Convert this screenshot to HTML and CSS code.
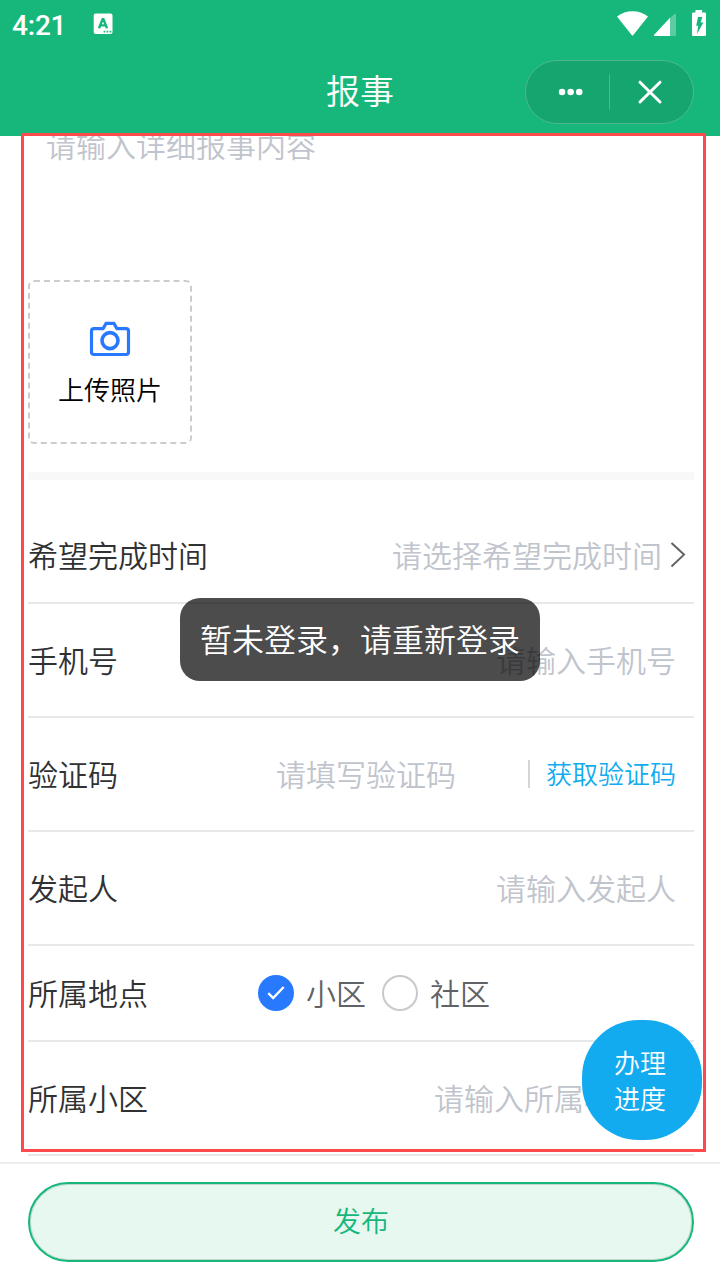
FILE: index.html
```
<!DOCTYPE html>
<html lang="zh-CN">
<head>
<meta charset="utf-8">
<title>报事</title>
<link rel="stylesheet" href="styles.css">
</head>
<body>
<div class="app">
  <header class="header">
    <div class="status">
      <span class="clock">4:21</span>
      <svg class="input-icon" width="20" height="22" viewBox="0 0 20 22">
        <rect x="0.7" y="0.5" width="18.8" height="20.5" rx="2" fill="#fff"/>
        <path d="M6 15.200L9.600 6.300h.8l3.600 8.900M7.200 12.400h5.600" fill="none" stroke="#17b77c" stroke-width="2.400"/>
        <path d="M10.600 18.700h1.700M13.600 18.700h1.700M16.600 18.700h1.700" stroke="#17b77c" stroke-width="1.700"/>
      </svg>
      <svg class="system-icons" width="92" height="28" viewBox="616 9 92 28">
        <path d="M617 16.500Q624 11.300 632.500 11.300T648 16.500L633.300 35q-.8 1-1.600 0z" fill="#fff"/>
        <path d="M670 18l4.600-4.100q1.400-.6 1.400.8V34.700q0 1.300-1.300 1.300H670z" fill="#fff" fill-opacity=".3"/>
        <path d="M670 17.800V36h-15.600q-1-.5 0-1.600z" fill="#fff"/>
        <path d="M695.500 10h6.600v2.500h2.600q1.300 0 1.300 1.300v21q0 1.200-1.300 1.200h-11.400q-1.300 0-1.300-1.200v-21q0-1.300 1.300-1.300h2.200z" fill="#fff"/>
        <path d="M698 17h4.300l-1.600 5.600h2.700L697 34l1.200-8.300h-2z" fill="#17b77c"/>
      </svg>
    </div>
    <div class="navbar">
      <h1 class="title">报事</h1>
      <div class="capsule">
        <svg class="capsule-half" width="84" height="62" viewBox="526 61 84 62">
          <g fill="#fff"><circle cx="562.500" cy="92" r="3.300"/><circle cx="571.200" cy="92" r="3.300"/><circle cx="579.900" cy="92" r="3.300"/></g>
        </svg>
        <span class="capsule-line"></span>
        <svg class="capsule-half" width="83" height="62" viewBox="610 61 83 62">
          <path d="M640 82.200L660 102M660 82.200L640 102" stroke="#fff" stroke-width="3" stroke-linecap="round"/>
        </svg>
      </div>
    </div>
  </header>

  <main class="content">
    <div class="detail">请输入详细报事内容</div>
    <div class="upload">
      <svg width="42" height="36" viewBox="89 321 42 36" fill="none" stroke="#2979ff" stroke-width="3.200" stroke-linejoin="round">
        <path d="M94 328.600h9.200l2.800-5.200h8l2.800 5.200h9.200q2.500 0 2.500 2.500V352q0 2.500-2.500 2.500H94q-2.500 0-2.500-2.500v-20.900q0-2.500 2.500-2.500z"/>
        <circle cx="110" cy="340.600" r="8" stroke-width="3.600"/>
      </svg>
      <span class="upload-text">上传照片</span>
    </div>
    <div class="band"></div>
    <div class="row row-short row-time">
      <span class="label">希望完成时间</span>
      <span class="hint">请选择希望完成时间</span>
      <svg class="chevron" width="18" height="28" viewBox="670 541 18 28"><path d="M671.500 543L684 554.600L671.500 566.500" fill="none" stroke="#606266" stroke-width="2"/></svg>
    </div>
    <div class="row"><span class="label">手机号</span><span class="hint">请输入手机号</span></div>
    <div class="row">
      <span class="label">验证码</span><span class="hint">请填写验证码</span>
      <span class="code-button"><span class="code-text">获取验证码</span></span>
    </div>
    <div class="row"><span class="label">发起人</span><span class="hint">请输入发起人</span></div>
    <div class="row row-short">
      <span class="label label-place">所属地点</span>
      <span class="radio radio-on"><svg width="36" height="36" viewBox="0 0 36 36"><path d="M10.300 18.200l4.900 4.900L25.700 12" fill="none" stroke="#fff" stroke-width="2.400"/></svg></span>
      <span class="choice">小区</span>
      <span class="radio"></span>
      <span class="choice">社区</span>
    </div>
    <div class="row row-estate"><span class="label">所属小区</span><span class="hint">请输入所属小区</span></div>
  </main>

  <footer class="footer"><div class="submit">发布</div></footer>

  <div class="outline"></div>
  <div class="progress"><span>办理</span><span>进度</span></div>
  <div class="toast">暂未登录，请重新登录</div>
</div>
</body>
</html>
```
FILE: styles.css
```
* { box-sizing: border-box; }
body {
  margin: 0;
  background: #fff;
  font-family: "Noto Sans CJK SC DemiLight", "Noto Sans CJK SC", sans-serif;
  font-weight: 350;
}
.app {
  position: relative;
  width: 720px;
  height: 1280px;
  overflow: hidden;
  display: flex;
  flex-direction: column;
}
svg { display: block; flex: none; }

.header { height: 136px; flex: none; background: #17b77c; color: #fff; }
.status { height: 48px; display: flex; align-items: flex-start; padding: 9px 12px 0; }
.clock {
  width: 81px;
  font: 500 28px/33px Roboto, sans-serif;
  letter-spacing: -0.2px;
}
.input-icon { margin-top: 4px; }
.system-icons { margin-left: auto; }
.navbar {
  height: 88px;
  display: grid;
  grid-template-columns: 1fr auto 1fr;
  align-items: center;
  padding-right: 26px;
  padding-left: 26px;
}
.title { grid-column: 2; margin: 0 0 4px; font-size: 34px; line-height: 50px; font-weight: 350; }
.capsule {
  justify-self: end;
  width: 169px;
  height: 64px;
  border: 1px solid #4eb88c;
  border-radius: 32px;
  background: #15a56f;
  display: flex;
  align-items: center;
}
.capsule-half { flex: 1; }
.capsule-line { width: 1px; height: 36px; background: #4cb68c; }

.content { height: 1026px; flex: none; padding: 0 26px 0 28px; overflow: hidden; }
.detail {
  height: 157px;
  margin-top: -13px;
  padding-left: 18px;
  font-size: 30px;
  line-height: 42px;
  color: #c0c4cc;
}
.upload {
  width: 164px;
  height: 164px;
  border: 2px dashed #ccc;
  border-radius: 6px;
  display: flex;
  flex-direction: column;
  align-items: center;
  padding-top: 39px;
  gap: 13px;
}
.upload-text { font-size: 26px; line-height: 38px; color: #000; }
.band { height: 8px; margin-top: 28px; background: #f8f8f8; }
.row {
  height: 114px;
  display: flex;
  align-items: center;
  border-bottom: 2px solid #e8e8e8;
  padding-right: 18px;
  font-size: 30px;
  line-height: 44px;
  color: #303133;
  white-space: nowrap;
}
.label, .hint, .choice { padding-bottom: 2px; }
.row-short { height: 96px; }
.row-time { margin-top: 28px; padding-right: 6px; }
.row-estate { padding-right: 50px; }
.hint { margin-left: auto; color: #c0c4cc; }
.chevron { margin-left: 8px; }
.code-button {
  margin-left: 72px;
  height: 28px;
  padding-left: 16px;
  border-left: 2px solid #d5d5d5;
  font-size: 26px;
  line-height: 26px;
  color: #12abf0;
}
.code-text { display: block; }
.label-place { width: 230px; }
.radio {
  width: 36px;
  height: 36px;
  border: 2px solid #c8c9cc;
  border-radius: 50%;
}
.radio-on { border: 0; background: #2979ff; }
.choice { margin: 0 16px 0 12px; color: #606266; }

.footer { flex: 1; border-top: 2px solid #ededed; padding: 18px 26px 18px 28px; background: #fff; }
.submit {
  height: 80px;
  border: 2px solid #17b77c;
  border-radius: 40px;
  background: #e7f8f1;
  box-shadow: inset 0 0 0 1px #c3d8cd;
  color: #17b77c;
  font-size: 28px;
  line-height: 72px;
  text-align: center;
}
.outline {
  position: absolute;
  left: 21px;
  top: 133px;
  width: 685px;
  height: 1019px;
  border: 3px solid #ff4a4d;
}
.progress {
  position: absolute;
  left: 582px;
  top: 1020px;
  width: 120px;
  height: 120px;
  padding-right: 4px;
  border-radius: 57px;
  background: #12abf0;
  color: #fff;
  font-size: 26px;
  line-height: 36px;
  display: flex;
  flex-direction: column;
  align-items: center;
  justify-content: center;
}
.toast {
  position: absolute;
  left: 180px;
  top: 598px;
  width: 360px;
  height: 83px;
  border-radius: 20px;
  background: rgba(0, 0, 0, 0.7);
  color: #fff;
  font-size: 32px;
  line-height: 80px;
  text-align: center;
}
```
